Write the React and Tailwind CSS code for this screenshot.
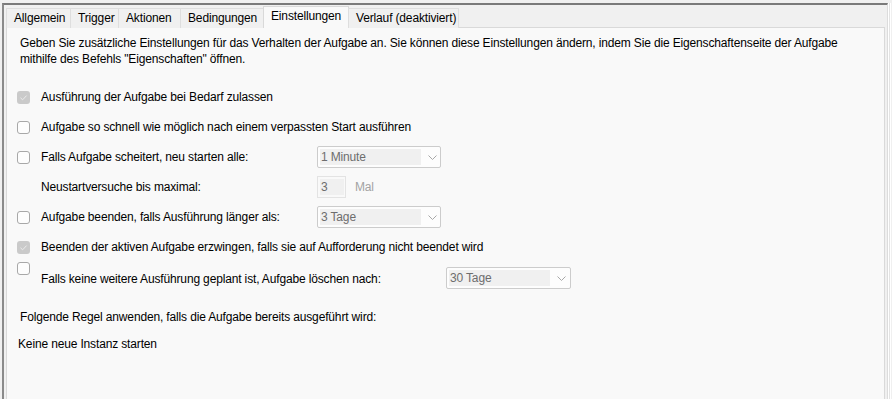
import React from 'react';

const tabs = [
    { label: 'Allgemein', w: 'w-[65px]' },
    { label: 'Trigger', w: 'w-[49px]' },
    { label: 'Aktionen', w: 'w-[63px]' },
    { label: 'Bedingungen', w: 'w-[84px]' },
    { label: 'Einstellungen', w: 'w-[86px]', active: true },
    { label: 'Verlauf (deaktiviert)', w: 'w-[111px]' },
];

function CheckBox({ checked }) {
    if (checked) {
        return (
            <span className="w-[13px] h-[13px] shrink-0 rounded-[3px] bg-[#cacaca] flex items-center justify-center">
                <svg width="13" height="13" viewBox="0 0 13 13">
                    <path d="M3.5 6.8 L5.6 8.8 L9.6 4.6" fill="none" stroke="#ececec" strokeWidth="1" />
                </svg>
            </span>
        );
    }
    return <span className="w-[13px] h-[13px] shrink-0 rounded-[3px] border border-[#a8a8a8] bg-[#fdfdfd]" />;
}

function Combo({ value, width = 'w-[124px]' }) {
    return (
        <div className={`${width} h-[22px] shrink-0 border border-[#cccccc] rounded-[2px] bg-[#fdfdfd] flex items-start pt-[2px] pl-[2px]`}>
            <span className="w-[101px] h-[16px] bg-[#f0f0f0] text-[#6d6d6d] leading-[16px] pl-[1px]">{value}</span>
            <svg className="ml-[7px] mt-[6px]" width="9" height="5" viewBox="0 0 9 5">
                <path d="M0.5 0.5 L4.5 4.5 L8.5 0.5" fill="none" stroke="#a8a8a8" strokeWidth="1" />
            </svg>
        </div>
    );
}

function Row({ checked, label, children }) {
    return (
        <div className="h-[30px] flex items-center">
            <CheckBox checked={checked} />
            <span className="ml-[11px] w-[276px] shrink-0 whitespace-nowrap">{label}</span>
            {children}
        </div>
    );
}

export default function App() {
    return (
        <div className="w-[892px] h-[399px] overflow-hidden bg-[#f0f0f0] pl-[2px] pt-[3px] flex font-['Liberation_Sans',Arial,sans-serif] text-[12px] leading-[16px] tracking-[-0.15px] text-black">
            {/* Frame */}
            <div className="w-[886px] h-[400px] shrink-0 border-t-2 border-l-2 border-r border-t-[#7a7a7a] border-l-[#8a8a8a] border-r-[#dcdcdc] pl-[2px] pt-[1px] flex flex-col">
                {/* Tabs */}
                <div className="flex items-end h-[22px] relative z-10">
                    {tabs.map((t, i) => (
                        <div
                            key={t.label}
                            className={
                                t.active
                                    ? `${t.w} h-[22px] -ml-px pl-[7px] pt-[1px] border border-b-0 border-[#d9d9d9] bg-[#f9f9f9] whitespace-nowrap`
                                    : `${t.w} h-[20px] ${i === 0 ? '' : '-ml-px'} pl-[7px] pt-[1px] border border-b-0 border-[#dedede] bg-[#f0f0f0] whitespace-nowrap`
                            }
                        >
                            {t.label}
                        </div>
                    ))}
                </div>

                {/* Panel */}
                <div className="w-[879px] flex-1 -mt-px border border-[#d9d9d9] bg-[#f9f9f9] pl-[10px] pt-[7px] flex flex-col">
                    <p className="ml-[3px] whitespace-nowrap">
                        Geben Sie zusätzliche Einstellungen für das Verhalten der Aufgabe an. Sie können diese Einstellungen ändern, indem Sie die Eigenschaftenseite der Aufgabe
                        <br />
                        mithilfe des Befehls "Eigenschaften" öffnen.
                    </p>

                    <div className="mt-[15px] flex flex-col">
                        <Row checked label="Ausführung der Aufgabe bei Bedarf zulassen" />
                        <div className="h-[30px] flex items-center">
                            <CheckBox />
                            <span className="ml-[11px] whitespace-nowrap">Aufgabe so schnell wie möglich nach einem verpassten Start ausführen</span>
                        </div>
                        <Row label="Falls Aufgabe scheitert, neu starten alle:">
                            <Combo value="1 Minute" />
                        </Row>
                        <div className="h-[30px] flex items-center">
                            <span className="ml-[24px] w-[276px] shrink-0 whitespace-nowrap">Neustartversuche bis maximal:</span>
                            <div className="w-[29px] h-[22px] border border-[#e3e3e3] pt-[2px] pl-[2px]">
                                <span className="block w-[24px] h-[16px] bg-[#f0f0f0] text-[#6d6d6d] pl-[1px]">3</span>
                            </div>
                            <span className="ml-[9px] text-[#a3a3a3]">Mal</span>
                        </div>
                        <Row label="Aufgabe beenden, falls Ausführung länger als:">
                            <Combo value="3 Tage" />
                        </Row>
                        <div className="h-[30px] flex items-center">
                            <CheckBox checked />
                            <span className="ml-[11px] whitespace-nowrap">Beenden der aktiven Aufgabe erzwingen, falls sie auf Aufforderung nicht beendet wird</span>
                        </div>
                        <div className="h-[30px] flex items-start">
                            <CheckBox />
                            <div className="ml-[11px] mt-[5px] h-[22px] flex items-center">
                                <span className="w-[405px] pt-[2px] shrink-0 whitespace-nowrap">Falls keine weitere Ausführung geplant ist, Aufgabe löschen nach:</span>
                                <Combo value="30 Tage" width="w-[125px]" />
                            </div>
                        </div>
                    </div>

                    <p className="ml-[3px] mt-[17px] whitespace-nowrap">Folgende Regel anwenden, falls die Aufgabe bereits ausgeführt wird:</p>
                    <p className="ml-[1px] mt-[11px] whitespace-nowrap">Keine neue Instanz starten</p>
                </div>
            </div>
            <div className="w-px h-full bg-white shrink-0" />
            <div className="w-px h-full bg-[#e3e3e3] shrink-0" />
            <div className="w-px h-full bg-white shrink-0" />
        </div>
    );
}
